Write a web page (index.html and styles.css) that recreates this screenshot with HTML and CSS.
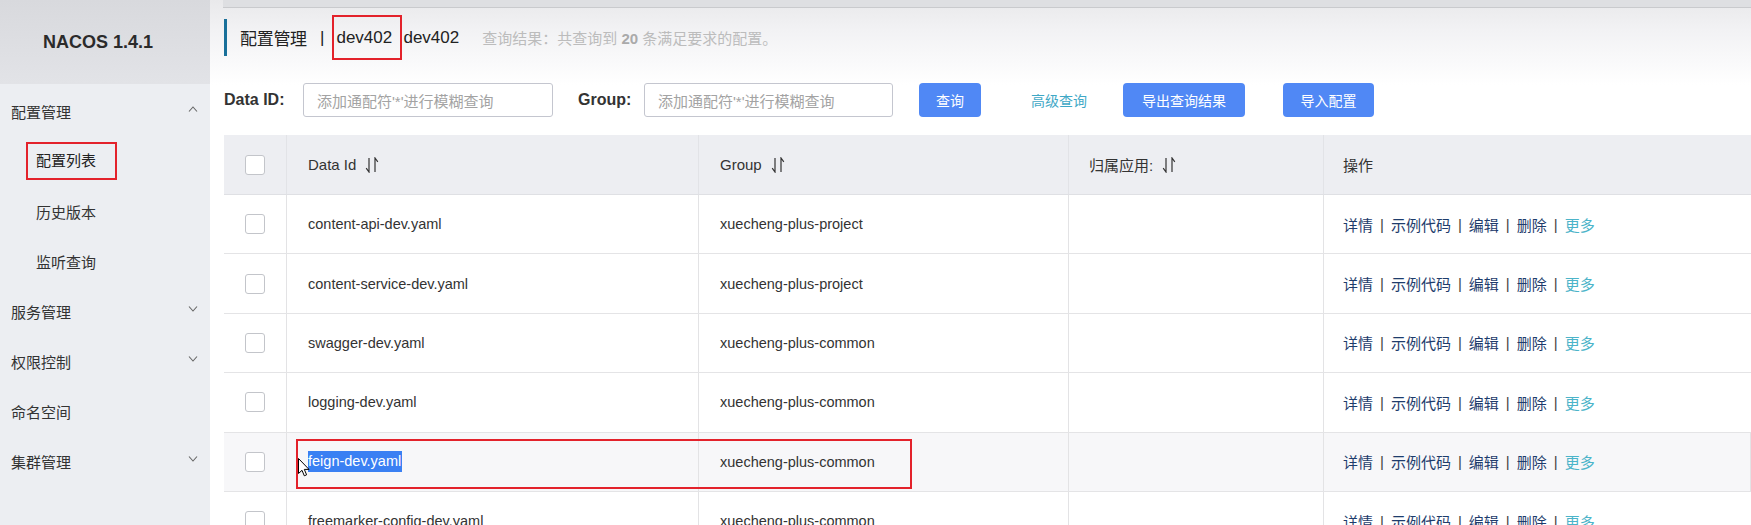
FILE: index.html
```html
<!DOCTYPE html>
<html lang="zh-CN">
<head>
<meta charset="utf-8">
<title>Nacos 配置管理</title>
<link rel="stylesheet" href="styles.css">
</head>
<body>
<div class="app">
  <aside class="sidebar">
    <div class="brand">NACOS 1.4.1</div>
    <ul class="menu">
      <li class="menu-item"><span>配置管理</span>
        <svg class="chev" width="10" height="6" viewBox="0 0 10 6"><path d="M1 5.5 L5 1 L9 5.5" fill="none" stroke="#666" stroke-width="1.1"/></svg>
      </li>
      <li class="sub-item"><span class="marked">配置列表</span></li>
      <li class="sub-item"><span>历史版本</span></li>
      <li class="sub-item"><span>监听查询</span></li>
      <li class="menu-item"><span>服务管理</span>
        <svg class="chev down" width="10" height="6" viewBox="0 0 10 6"><path d="M1 0.5 L5 5 L9 0.5" fill="none" stroke="#666" stroke-width="1.1"/></svg>
      </li>
      <li class="menu-item"><span>权限控制</span>
        <svg class="chev down" width="10" height="6" viewBox="0 0 10 6"><path d="M1 0.5 L5 5 L9 0.5" fill="none" stroke="#666" stroke-width="1.1"/></svg>
      </li>
      <li class="menu-item"><span>命名空间</span></li>
      <li class="menu-item"><span>集群管理</span>
        <svg class="chev down" width="10" height="6" viewBox="0 0 10 6"><path d="M1 0.5 L5 5 L9 0.5" fill="none" stroke="#666" stroke-width="1.1"/></svg>
      </li>
    </ul>
  </aside>

  <main class="main">
    <div class="topline"></div>
    <div class="title-row">
      <span class="title">配置管理</span>
      <span class="sep">|</span>
      <span class="ns-box">dev402</span>
      <span class="ns">dev402</span>
      <span class="summary">查询结果：共查询到 <b>20</b> 条满足要求的配置。</span>
    </div>

    <div class="filter-row">
      <label class="flabel lbl-id">Data ID:</label>
      <div class="input in-id">添加通配符'*'进行模糊查询</div>
      <label class="flabel lbl-group">Group:</label>
      <div class="input in-group">添加通配符'*'进行模糊查询</div>
      <button class="btn btn-query">查询</button>
      <a class="adv">高级查询</a>
      <button class="btn btn-export">导出查询结果</button>
      <button class="btn btn-import">导入配置</button>
    </div>

    <div class="table">
      <div class="row head">
        <div class="cell c-check"><span class="checkbox"></span></div>
        <div class="cell c-id">Data Id
          <svg class="sort" width="14" height="16" viewBox="0 0 14 16"><path d="M4 1 V15 L1.2 11.2 M10 15 V1 L12.8 4.8" fill="none" stroke="#333" stroke-width="1.2"/></svg>
        </div>
        <div class="cell c-group">Group
          <svg class="sort" width="14" height="16" viewBox="0 0 14 16"><path d="M4 1 V15 L1.2 11.2 M10 15 V1 L12.8 4.8" fill="none" stroke="#333" stroke-width="1.2"/></svg>
        </div>
        <div class="cell c-app">归属应用:
          <svg class="sort" width="14" height="16" viewBox="0 0 14 16"><path d="M4 1 V15 L1.2 11.2 M10 15 V1 L12.8 4.8" fill="none" stroke="#333" stroke-width="1.2"/></svg>
        </div>
        <div class="cell c-op">操作</div>
      </div>

      <div class="row">
        <div class="cell c-check"><span class="checkbox"></span></div>
        <div class="cell c-id">content-api-dev.yaml</div>
        <div class="cell c-group">xuecheng-plus-project</div>
        <div class="cell c-app"></div>
        <div class="cell c-op ops"><a>详情</a><i>|</i><a>示例代码</a><i>|</i><a>编辑</a><i>|</i><a>删除</a><i>|</i><a class="more">更多</a></div>
      </div>
      <div class="row">
        <div class="cell c-check"><span class="checkbox"></span></div>
        <div class="cell c-id">content-service-dev.yaml</div>
        <div class="cell c-group">xuecheng-plus-project</div>
        <div class="cell c-app"></div>
        <div class="cell c-op ops"><a>详情</a><i>|</i><a>示例代码</a><i>|</i><a>编辑</a><i>|</i><a>删除</a><i>|</i><a class="more">更多</a></div>
      </div>
      <div class="row">
        <div class="cell c-check"><span class="checkbox"></span></div>
        <div class="cell c-id">swagger-dev.yaml</div>
        <div class="cell c-group">xuecheng-plus-common</div>
        <div class="cell c-app"></div>
        <div class="cell c-op ops"><a>详情</a><i>|</i><a>示例代码</a><i>|</i><a>编辑</a><i>|</i><a>删除</a><i>|</i><a class="more">更多</a></div>
      </div>
      <div class="row">
        <div class="cell c-check"><span class="checkbox"></span></div>
        <div class="cell c-id">logging-dev.yaml</div>
        <div class="cell c-group">xuecheng-plus-common</div>
        <div class="cell c-app"></div>
        <div class="cell c-op ops"><a>详情</a><i>|</i><a>示例代码</a><i>|</i><a>编辑</a><i>|</i><a>删除</a><i>|</i><a class="more">更多</a></div>
      </div>
      <div class="row hover">
        <div class="cell c-check"><span class="checkbox"></span></div>
        <div class="cell c-id"><span class="selected">feign-dev.yaml</span></div>
        <div class="cell c-group">xuecheng-plus-common</div>
        <div class="cell c-app"></div>
        <div class="cell c-op ops"><a>详情</a><i>|</i><a>示例代码</a><i>|</i><a>编辑</a><i>|</i><a>删除</a><i>|</i><a class="more">更多</a></div>
        <div class="annot"></div>
        <svg class="cursor" width="12" height="19" viewBox="0 0 12 19"><path d="M0.5 0.5 V15.5 L4 12.3 L6.3 17.8 L8.6 16.8 L6.3 11.4 H11 Z" fill="#fff" stroke="#000" stroke-width="1" stroke-linejoin="round"/></svg>
      </div>
      <div class="row">
        <div class="cell c-check"><span class="checkbox"></span></div>
        <div class="cell c-id">freemarker-config-dev.yaml</div>
        <div class="cell c-group">xuecheng-plus-common</div>
        <div class="cell c-app"></div>
        <div class="cell c-op ops"><a>详情</a><i>|</i><a>示例代码</a><i>|</i><a>编辑</a><i>|</i><a>删除</a><i>|</i><a class="more">更多</a></div>
      </div>
    </div>
  </main>
</div>
</body>
</html>
```

FILE: styles.css
```css
* { box-sizing: border-box; }
html, body {
  margin: 0;
  padding: 0;
  width: 1751px;
  height: 525px;
  overflow: hidden;
  background: #fff;
  font-family: "Liberation Sans", "Noto Sans CJK SC", sans-serif;
  color: #333;
}
.app {
  display: flex;
  height: 525px;
}

/* Sidebar */
.sidebar {
  width: 210px;
  flex: 0 0 210px;
  background: #eceef2;
}
.brand {
  height: 84px;
  display: flex;
  align-items: center;
  padding-left: 43px;
  font-weight: bold;
  font-size: 18px;
  color: #2b2b2b;
  background: linear-gradient(#d8d9dd, #e2e3e7);
}
.menu {
  list-style: none;
  margin: 0;
  padding: 2px 0 0 0;
}
.menu-item, .sub-item {
  height: 50px;
  display: flex;
  align-items: center;
  font-size: 15px;
  color: #333;
}
.menu-item {
  padding-left: 11px;
  justify-content: space-between;
  padding-right: 12px;
}
.sub-item {
  padding-left: 36px;
}
.chev { margin-top: -4px; }
.marked {
  display: inline-block;
  margin-left: -10px;
  border: 2px solid #e3222b;
  padding: 0 19px 0 8px;
  line-height: 34px;
  color: #222;
}

/* Main */
.main {
  flex: 1;
  padding-left: 14px;
  background: linear-gradient(#e9e9eb 0px, #f2f2f4 30px, #fff 85px);
  position: relative;
}
.topline {
  height: 8px;
  background: #dedfe2;
  border-bottom: 1px solid #c9cacd;
  margin-left: -1px;
}
.title-row {
  margin-top: 11px;
  height: 37px;
  border-left: 3px solid #19709a;
  padding-left: 13px;
  display: flex;
  align-items: center;
  font-size: 17px;
  color: #222;
  white-space: nowrap;
}
.title { width: 69px; letter-spacing: -0.3px; }
.sep { margin-left: 11px; margin-right: 8px; }
.ns-box {
  display: inline-flex;
  align-items: center;
  width: 70px;
  height: 45px;
  border: 2px solid #e3222b;
  padding-left: 2px;
}
.ns { margin-left: 1px; }
.summary {
  margin-left: 23px;
  font-size: 15px;
  color: #bcbcbc;
}
.summary b { color: #aaa; }

.filter-row {
  margin-top: 27px;
  height: 34px;
  display: flex;
  align-items: center;
  white-space: nowrap;
}
.flabel {
  font-weight: bold;
  font-size: 16px;
  color: #333;
}
.lbl-id { width: 79px; }
.lbl-group { width: 66px; margin-left: 25px; }
.input {
  height: 34px;
  border: 1px solid #c4c6cf;
  border-radius: 3px;
  background: #fff;
  display: flex;
  align-items: center;
  padding-left: 13px;
  font-size: 15px;
  color: #a3a3a3;
}
.in-id { width: 250px; }
.in-group { width: 249px; }
.btn {
  height: 34px;
  border: none;
  border-radius: 4px;
  background: #5088f5;
  color: #fff;
  font-family: inherit;
  font-size: 14px;
  padding: 0;
}
.btn-query { width: 62px; margin-left: 26px; }
.adv {
  margin-left: 50px;
  width: 60px;
  font-size: 14px;
  color: #3fa8c6;
}
.btn-export { width: 122px; margin-left: 32px; }
.btn-import { width: 91px; margin-left: 38px; }

/* Table */
.table {
  margin-top: 18px;
}
.row {
  display: grid;
  grid-template-columns: 63px 412px 370px 255px 1fr;
  height: 59.4px;
  border-bottom: 1px solid #e4e4e6;
  background: #fff;
  position: relative;
}
.row.head {
  height: 60px;
  background: #edeef2;
  border-bottom: 1px solid #dfe0e4;
}
.row.hover { background: #f7f7f9; }
.cell {
  display: flex;
  align-items: center;
  font-size: 14.5px;
  color: #333;
  border-right: 1px solid #e3e3e5;
  padding-left: 20px;
  white-space: nowrap;
}
.head .cell { border-right-color: #e2e3e7; font-size: 15px; color: #333; }
.cell:last-child { border-right: none; }
.c-check { justify-content: center; padding-left: 0; }
.c-id, .c-group { padding-left: 21px; }
.c-op { padding-left: 19px; }
.sort { margin-left: 9px; }
.checkbox {
  width: 20px;
  height: 20px;
  border: 1px solid #c3c5ca;
  border-radius: 3px;
  background: #fff;
}
.selected {
  background: #3a80f3;
  color: #fff;
  line-height: 21px;
  padding-right: 1px;
}
.ops { font-size: 15px; }
.ops a { color: #1e3c6c; }
.ops a.more { color: #4cb4c9; }
.ops i {
  font-style: normal;
  color: #444;
  margin: 0 7px;
}
.annot {
  position: absolute;
  left: 72px;
  top: 6px;
  width: 616px;
  height: 50px;
  border: 2px solid #e3222b;
  pointer-events: none;
}
.cursor {
  position: absolute;
  left: 74px;
  top: 25px;
}
```
